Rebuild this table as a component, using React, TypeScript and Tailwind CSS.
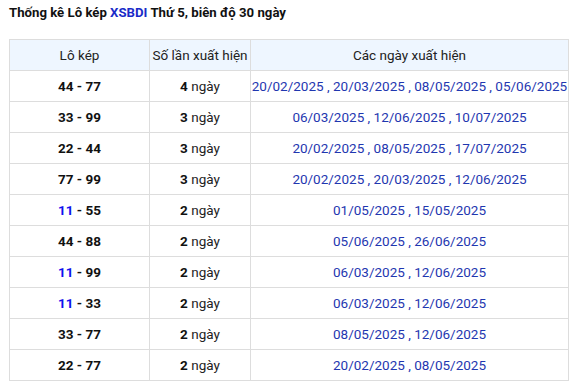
import React from "react";

const rows: { a: string; b: string; blue?: boolean; n: number; dates: string }[] = [
  { a: "44", b: "77", n: 4, dates: "20/02/2025 , 20/03/2025 , 08/05/2025 , 05/06/2025" },
  { a: "33", b: "99", n: 3, dates: "06/03/2025 , 12/06/2025 , 10/07/2025" },
  { a: "22", b: "44", n: 3, dates: "20/02/2025 , 08/05/2025 , 17/07/2025" },
  { a: "77", b: "99", n: 3, dates: "20/02/2025 , 20/03/2025 , 12/06/2025" },
  { a: "11", b: "55", blue: true, n: 2, dates: "01/05/2025 , 15/05/2025" },
  { a: "44", b: "88", n: 2, dates: "05/06/2025 , 26/06/2025" },
  { a: "11", b: "99", blue: true, n: 2, dates: "06/03/2025 , 12/06/2025" },
  { a: "11", b: "33", blue: true, n: 2, dates: "06/03/2025 , 12/06/2025" },
  { a: "33", b: "77", n: 2, dates: "08/05/2025 , 12/06/2025" },
  { a: "22", b: "77", n: 2, dates: "20/02/2025 , 08/05/2025" },
];

export default function App() {
  return (
    <div className="w-[574px] h-[385px] bg-white px-[9px] pt-[4px]" style={{ fontFamily: "Roboto, 'Noto Sans', sans-serif" }}>
      <h2 className="text-[13.2px] font-bold leading-[18px] text-[#111] h-[35px]">
        Thống kê Lô kép <span className="text-[#1a2bc8]">XSBDI</span> Thứ 5, biên độ 30 ngày
      </h2>
      <table className="w-[559px] border-collapse text-[13.5px] text-[#222] table-fixed">
        <colgroup>
          <col className="w-[140px]" />
          <col className="w-[101px]" />
          <col className="w-[318px]" />
        </colgroup>
        <thead>
          <tr className="h-[31px] bg-[#eef6ff]">
            <th className="border border-[#dddddd] font-normal text-center">Lô kép</th>
            <th className="border border-[#dddddd] font-normal text-center">Số lần xuất hiện</th>
            <th className="border border-[#dddddd] font-normal text-center">Các ngày xuất hiện</th>
          </tr>
        </thead>
        <tbody>
          {rows.map((r, i) => (
            <tr key={i} className="h-[31px]">
              <td className="border border-[#dddddd] text-center font-bold text-[#111]">
                {r.blue ? <span className="text-[#1010ee]">{r.a}</span> : r.a} - {r.b}
              </td>
              <td className="border border-[#dddddd] text-center text-[#222]">
                <span className="font-bold text-[#111]">{r.n}</span> ngày
              </td>
              <td className="border border-[#dddddd] text-center text-[#1f37b0] whitespace-nowrap">{r.dates}</td>
            </tr>
          ))}
        </tbody>
      </table>
    </div>
  );
}
